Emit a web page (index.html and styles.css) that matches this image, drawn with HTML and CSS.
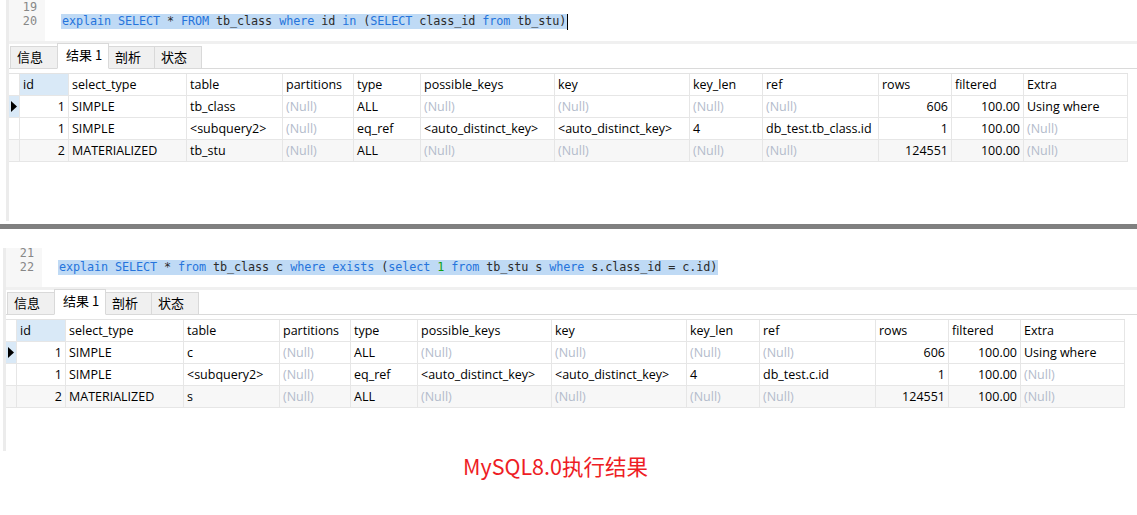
FILE: index.html
```html
<!DOCTYPE html>
<html lang="zh-CN">
<head>
<meta charset="utf-8">
<title>MySQL8.0 explain</title>
<link rel="stylesheet" href="styles.css">
</head>
<body>
<div class="page">
  <section class="panel panel--top">
    <div class="strip"></div>
    <div class="main">
      <div class="editor editor--top">
        <div class="gutter"><div class="ln">19</div><div class="ln">20</div></div>
        <div class="code">
          <div class="line">&nbsp;</div>
          <div class="line"><span class="sel"><span class="kw">explain</span> <span class="kw">SELECT</span> * <span class="kw">FROM</span> tb_class <span class="kw">where</span> id <span class="kw">in</span> (<span class="kw">SELECT</span> class_id <span class="kw">from</span> tb_stu)</span><span class="cursor"></span></div>
        </div>
      </div>
      <div class="band"></div>
      <div class="tabs">
        <div class="tab tab--w47">信息</div>
        <div class="tab tab--active">结果 1</div>
        <div class="tab tab--w46">剖析</div>
        <div class="tab tab--w47">状态</div>
      </div>
      <div class="grid">
        <div class="c ind"></div><div class="c h hsel">id</div><div class="c h">select_type</div><div class="c h">table</div><div class="c h">partitions</div><div class="c h">type</div><div class="c h">possible_keys</div><div class="c h">key</div><div class="c h">key_len</div><div class="c h">ref</div><div class="c h">rows</div><div class="c h">filtered</div><div class="c h">Extra</div>

        <div class="c ind ind--cur"><svg width="6" height="11" viewBox="0 0 6 11"><polygon points="0,0 6,5.5 0,11" fill="#000"/></svg></div><div class="c r">1</div><div class="c">SIMPLE</div><div class="c">tb_class</div><div class="c nl">(Null)</div><div class="c">ALL</div><div class="c nl">(Null)</div><div class="c nl">(Null)</div><div class="c nl">(Null)</div><div class="c nl">(Null)</div><div class="c r">606</div><div class="c r">100.00</div><div class="c">Using where</div>

        <div class="c ind"></div><div class="c r">1</div><div class="c">SIMPLE</div><div class="c">&lt;subquery2&gt;</div><div class="c nl">(Null)</div><div class="c">eq_ref</div><div class="c">&lt;auto_distinct_key&gt;</div><div class="c">&lt;auto_distinct_key&gt;</div><div class="c">4</div><div class="c">db_test.tb_class.id</div><div class="c r">1</div><div class="c r">100.00</div><div class="c nl">(Null)</div>

        <div class="c ind alt"></div><div class="c r alt">2</div><div class="c alt">MATERIALIZED</div><div class="c alt">tb_stu</div><div class="c nl alt">(Null)</div><div class="c alt">ALL</div><div class="c nl alt">(Null)</div><div class="c nl alt">(Null)</div><div class="c nl alt">(Null)</div><div class="c nl alt">(Null)</div><div class="c r alt">124551</div><div class="c r alt">100.00</div><div class="c nl alt">(Null)</div>
      </div>
    </div>
  </section>

  <div class="splitter"></div>

  <section class="panel panel--bottom">
    <div class="strip"></div>
    <div class="main">
      <div class="editor editor--bottom">
        <div class="gutter"><div class="ln">21</div><div class="ln">22</div></div>
        <div class="code">
          <div class="line">&nbsp;</div>
          <div class="line"><span class="sel"><span class="kw">explain</span> <span class="kw">SELECT</span> * <span class="kw">from</span> tb_class c <span class="kw">where</span> <span class="kw">exists</span> (<span class="kw">select</span> <span class="num">1</span> <span class="kw">from</span> tb_stu s <span class="kw">where</span> s.class_id = c.id)</span></div>
        </div>
      </div>
      <div class="band"></div>
      <div class="tabs">
        <div class="tab tab--w47">信息</div>
        <div class="tab tab--active">结果 1</div>
        <div class="tab tab--w46">剖析</div>
        <div class="tab tab--w47">状态</div>
      </div>
      <div class="grid">
        <div class="c ind"></div><div class="c h hsel">id</div><div class="c h">select_type</div><div class="c h">table</div><div class="c h">partitions</div><div class="c h">type</div><div class="c h">possible_keys</div><div class="c h">key</div><div class="c h">key_len</div><div class="c h">ref</div><div class="c h">rows</div><div class="c h">filtered</div><div class="c h">Extra</div>

        <div class="c ind ind--cur"><svg width="6" height="11" viewBox="0 0 6 11"><polygon points="0,0 6,5.5 0,11" fill="#000"/></svg></div><div class="c r">1</div><div class="c">SIMPLE</div><div class="c">c</div><div class="c nl">(Null)</div><div class="c">ALL</div><div class="c nl">(Null)</div><div class="c nl">(Null)</div><div class="c nl">(Null)</div><div class="c nl">(Null)</div><div class="c r">606</div><div class="c r">100.00</div><div class="c">Using where</div>

        <div class="c ind"></div><div class="c r">1</div><div class="c">SIMPLE</div><div class="c">&lt;subquery2&gt;</div><div class="c nl">(Null)</div><div class="c">eq_ref</div><div class="c">&lt;auto_distinct_key&gt;</div><div class="c">&lt;auto_distinct_key&gt;</div><div class="c">4</div><div class="c">db_test.c.id</div><div class="c r">1</div><div class="c r">100.00</div><div class="c nl">(Null)</div>

        <div class="c ind alt"></div><div class="c r alt">2</div><div class="c alt">MATERIALIZED</div><div class="c alt">s</div><div class="c nl alt">(Null)</div><div class="c alt">ALL</div><div class="c nl alt">(Null)</div><div class="c nl alt">(Null)</div><div class="c nl alt">(Null)</div><div class="c nl alt">(Null)</div><div class="c r alt">124551</div><div class="c r alt">100.00</div><div class="c nl alt">(Null)</div>
      </div>
    </div>
  </section>

  <p class="caption">MySQL8.0执行结果</p>
</div>
</body>
</html>
```

FILE: styles.css
```css
* { box-sizing: border-box; }

html, body {
  margin: 0;
  padding: 0;
  background: #ffffff;
}

body {
  font-family: "Open Sans", "Noto Sans CJK SC", sans-serif;
  font-size: 12.5px;
  color: #000;
  width: 1137px;
  height: 515px;
  overflow: hidden;
}

.page {
  display: flex;
  flex-direction: column;
}

/* ---------- panel ---------- */
.panel {
  display: flex;
  flex-direction: row;
}

.panel--top {
  margin-left: 6px;
  height: 221px;
}

.panel--bottom {
  margin-left: 3px;
  margin-top: 19px;
  height: 203px;
}

.strip {
  width: 3px;
  flex: 0 0 3px;
  background: #ececec;
}

.main {
  flex: 1;
  display: flex;
  flex-direction: column;
  min-width: 0;
}

/* ---------- editor ---------- */
.editor {
  display: flex;
  flex-direction: row;
  font-family: "DejaVu Sans Mono", "Liberation Mono", monospace;
  font-size: 11.8px;
}

.editor--top { height: 41px; }
.editor--bottom { height: 39px; }

.gutter {
  width: 36px;
  flex: 0 0 36px;
  background: #f7f7f7;
  color: #878787;
  text-align: right;
  padding-right: 8px;
}

.code {
  flex: 1;
  padding-left: 17px;
  color: #2b2b2b;
}

.ln, .line {
  height: 15px;
  line-height: 15px;
}

/* first visible line is partly scrolled out of the editor viewport */
.editor--top .ln:first-child,
.editor--top .line:first-child {
  height: 14px;
  line-height: 14px;
}

.editor--bottom .ln:first-child,
.editor--bottom .line:first-child {
  height: 12px;
  line-height: 10px;
}

.line {
  display: flex;
  align-items: stretch;
  white-space: pre;
  letter-spacing: -0.1px;
}

.sel {
  display: inline-block;
  background: #bfdaf5;
  margin-left: -1px;
  padding-left: 1px;
  padding-right: 1px;
  line-height: 15px;
}

.kw { color: #2574dc; }
.num { color: #10a010; }

.cursor {
  display: inline-block;
  width: 1px;
  height: 16px;
  background: #000;
}

.band {
  height: 3px;
  background: #f0f0f0;
}

/* ---------- tabs ---------- */
.tabs {
  display: flex;
  align-items: flex-end;
  height: 25px;
  padding-left: 1px;
  border-bottom: 1px solid #dadada;
  font-family: "Noto Sans CJK SC", sans-serif;
  font-size: 13px;
}

.tab {
  height: 23px;
  margin-bottom: -1px;
  padding-left: 6px;
  line-height: 20px;
  background: #f0f0f0;
  border: 1px solid #d9d9d9;
  color: #000;
}

.tab + .tab { margin-left: -1px; }

.tab--w47 { width: 48px; }
.tab--w46 { width: 47px; }

.tab--active {
  width: 52px;
  height: 26px;
  padding-left: 8px;
  line-height: 22px;
  background: #ffffff;
  border-color: #d9d9d9;
  border-bottom-color: #ffffff;
  position: relative;
  z-index: 1;
}

/* ---------- result grid ---------- */
.grid {
  margin-top: 4px;
  display: grid;
  grid-template-columns: 11px 49px 118px 96px 71px 67px 134px 135px 73px 116px 73px 72px 104px;
  grid-auto-rows: 22px;
  width: 1119px;
  border-top: 1px solid #e3e3e3;
}

.c {
  border-right: 1px solid #e6e6e6;
  border-bottom: 1px solid #e6e6e6;
  padding: 0 3px;
  line-height: 21px;
  white-space: nowrap;
}

.h { background: #ffffff; }
.hsel { background: #d9e9f7; }

.r { text-align: right; }

.nl { color: #b3bbcb; }

.alt { background: #f7f7f7; }

.ind {
  padding: 0;
  display: flex;
  align-items: center;
  justify-content: center;
}

.ind--cur { background: #d9e9f7; }

.ind svg { display: block; }

/* ---------- splitter ---------- */
.splitter {
  margin-top: 3px;
  height: 5px;
  background: #808080;
}

/* ---------- caption ---------- */
.caption {
  margin: 0;
  padding-left: 463px;
  height: 30px;
  line-height: 30px;
  font-family: "Noto Sans CJK SC", sans-serif;
  font-size: 21.5px;
  color: #ee1d25;
}
```
